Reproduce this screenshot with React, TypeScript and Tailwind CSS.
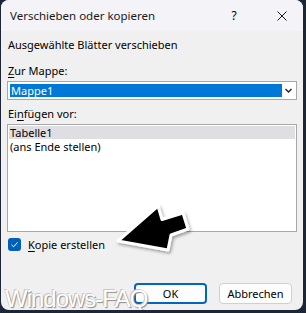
import React from 'react';

const font = { fontFamily: '"Noto Sans", "Open Sans", sans-serif' };

function Mnemonic({ text, at }: { text: string; at: number }) {
  return (
    <>
      {text.slice(0, at)}
      <span className="underline underline-offset-2">{text[at]}</span>
      {text.slice(at + 1)}
    </>
  );
}

export default function App() {
  return (
    <div className="w-[306px] h-[313px] bg-[#1c2636] overflow-hidden" style={font}>
      <div className="relative ml-px w-[302px] h-[310px] rounded-lg overflow-hidden bg-[#f0f0f0] flex flex-col text-[11px] text-black leading-none">
        {/* Title bar */}
        <div className="h-[31px] shrink-0 bg-[#f3f3f8] flex items-center pl-[9px] pr-[14px]">
          <span className="flex-1 text-[11.5px] text-[#1a1a1a]">Verschieben oder kopieren</span>
          <span className="w-[12px] text-center mr-[36px] text-[12px]">?</span>
          <svg width="12" height="12" viewBox="0 0 12 12" className="mr-[1px]">
            <path d="M1.5 1.5 L10.5 10.5 M10.5 1.5 L1.5 10.5" stroke="#1a1a1a" strokeWidth="1" />
          </svg>
        </div>

        {/* Body */}
        <div className="flex-1 flex flex-col px-[6px]">
          <div className="mt-[7px] pl-[1px] h-[13px] flex items-center">Ausgewählte Blätter verschieben</div>

          <div className="mt-[13px] pl-[1px] h-[13px] flex items-center">
            <Mnemonic text="Zur Mappe:" at={0} />
          </div>
          <div className="mt-[4px] h-[19px] border border-[#a8a8a8] bg-white flex items-center p-[2px] pr-[1px]">
            <div className="flex-1 h-[13px] bg-[#0078d7] text-white flex items-center pl-[1px]">Mappe1</div>
            <svg width="9" height="9" viewBox="0 0 9 9" className="mx-[2px]">
              <path d="M1.5 3 L4.5 6 L7.5 3" stroke="#222" strokeWidth="1.4" fill="none" />
            </svg>
          </div>

          <div className="mt-[7px] pl-[1px] h-[13px] flex items-center">
            <Mnemonic text="Einfügen vor:" at={2} />
          </div>
          <div className="mt-[4px] h-[108px] border border-[#a8a8a8] bg-white p-px">
            <div className="h-[13px] bg-[#dedee3] flex items-center pl-[1px]">Tabelle1</div>
            <div className="h-[15px] flex items-center pl-[1px]">(ans Ende stellen)</div>
          </div>

          <div className="mt-[6px] h-[13px] flex items-center gap-[7px] pl-[1px]">
            <div className="w-[13px] h-[13px] rounded-[3px] bg-[#005fb8] flex items-center justify-center">
              <svg width="9" height="9" viewBox="0 0 9 9">
                <path d="M1.5 4.8 L3.6 6.8 L7.6 2.3" stroke="white" strokeWidth="1" fill="none" />
              </svg>
            </div>
            <span>
              <Mnemonic text="Kopie erstellen" at={0} />
            </span>
          </div>

          <div className="mt-auto mb-[6px] flex justify-end gap-[12px] pr-[5px]">
            <button className="w-[73px] h-[21px] rounded-[4px] bg-[#fdfdfd] border-2 border-[#0067c0] text-[11px] flex items-center justify-center">
              OK
            </button>
            <button className="w-[73px] h-[21px] rounded-[4px] bg-[#fdfdfd] border border-[#d0d0d0] text-[11px] flex items-center justify-center">
              Abbrechen
            </button>
          </div>
        </div>

        {/* Watermark */}
        <div
          className="absolute left-[4px] top-[287px] text-[24px] text-white leading-none tracking-[-1px]"
          style={{ fontFamily: '"Liberation Sans", Arial, sans-serif', textShadow: '1px 1px 1px #8a8a8a, -1px -1px 0 #c8c8c8' }}
        >
          Windows-FAQ
        </div>

        {/* Arrow annotation */}
        <svg className="absolute left-0 top-0" width="302" height="310" viewBox="0 0 302 310">
          <defs>
            <filter id="sh" x="-20%" y="-20%" width="140%" height="140%">
              <feDropShadow dx="1.5" dy="2" stdDeviation="1.5" floodColor="#000" floodOpacity="0.35" />
            </filter>
          </defs>
          <polygon
            points="117,241 157,206 161,219.5 182,213 187,229 170,235 167,250"
            fill="#000"
            stroke="#fff"
            strokeWidth="3"
            strokeLinejoin="round"
            filter="url(#sh)"
          />
        </svg>
      </div>
    </div>
  );
}
